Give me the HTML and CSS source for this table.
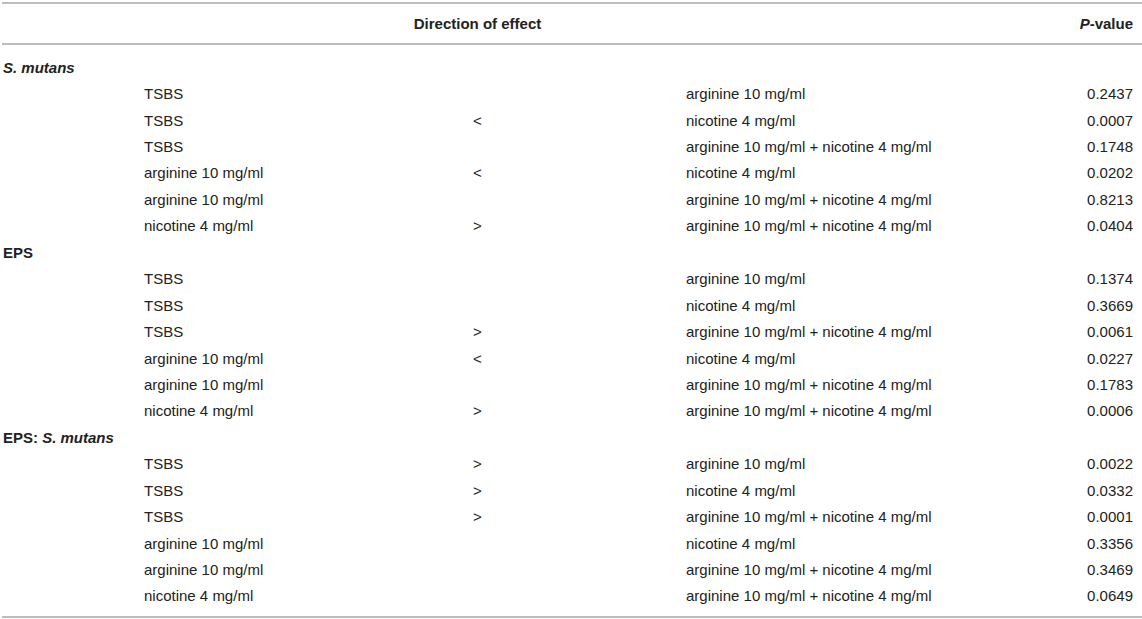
FILE: index.html
```html
<!DOCTYPE html>
<html lang="en">
<head>
  <meta charset="UTF-8">
  <title>Direction of effect</title>
  <link rel="stylesheet" href="styles.css">
</head>
<body>
  <table class="results">
    <colgroup>
      <col class="c-indent">
      <col class="c-label">
      <col class="c-dir">
      <col class="c-other">
      <col class="c-p">
    </colgroup>
    <thead>
      <tr>
        <th></th>
        <th></th>
        <th class="dir">Direction of effect</th>
        <th></th>
        <th class="pval"><i>P</i>-value</th>
      </tr>
    </thead>
    <tbody>
      <tr class="spacer"><td colspan="5"></td></tr>
      <tr class="section"><td colspan="5"><i>S. mutans</i></td></tr>
      <tr><td></td><td>TSBS</td><td class="dir"></td><td class="other">arginine 10 mg/ml</td><td class="pval">0.2437</td></tr>
      <tr><td></td><td>TSBS</td><td class="dir">&lt;</td><td class="other">nicotine 4 mg/ml</td><td class="pval">0.0007</td></tr>
      <tr><td></td><td>TSBS</td><td class="dir"></td><td class="other">arginine 10 mg/ml + nicotine 4 mg/ml</td><td class="pval">0.1748</td></tr>
      <tr><td></td><td>arginine 10 mg/ml</td><td class="dir">&lt;</td><td class="other">nicotine 4 mg/ml</td><td class="pval">0.0202</td></tr>
      <tr><td></td><td>arginine 10 mg/ml</td><td class="dir"></td><td class="other">arginine 10 mg/ml + nicotine 4 mg/ml</td><td class="pval">0.8213</td></tr>
      <tr><td></td><td>nicotine 4 mg/ml</td><td class="dir">&gt;</td><td class="other">arginine 10 mg/ml + nicotine 4 mg/ml</td><td class="pval">0.0404</td></tr>

      <tr class="section"><td colspan="5">EPS</td></tr>
      <tr><td></td><td>TSBS</td><td class="dir"></td><td class="other">arginine 10 mg/ml</td><td class="pval">0.1374</td></tr>
      <tr><td></td><td>TSBS</td><td class="dir"></td><td class="other">nicotine 4 mg/ml</td><td class="pval">0.3669</td></tr>
      <tr><td></td><td>TSBS</td><td class="dir">&gt;</td><td class="other">arginine 10 mg/ml + nicotine 4 mg/ml</td><td class="pval">0.0061</td></tr>
      <tr><td></td><td>arginine 10 mg/ml</td><td class="dir">&lt;</td><td class="other">nicotine 4 mg/ml</td><td class="pval">0.0227</td></tr>
      <tr><td></td><td>arginine 10 mg/ml</td><td class="dir"></td><td class="other">arginine 10 mg/ml + nicotine 4 mg/ml</td><td class="pval">0.1783</td></tr>
      <tr><td></td><td>nicotine 4 mg/ml</td><td class="dir">&gt;</td><td class="other">arginine 10 mg/ml + nicotine 4 mg/ml</td><td class="pval">0.0006</td></tr>

      <tr class="section"><td colspan="5">EPS: <i>S. mutans</i></td></tr>
      <tr><td></td><td>TSBS</td><td class="dir">&gt;</td><td class="other">arginine 10 mg/ml</td><td class="pval">0.0022</td></tr>
      <tr><td></td><td>TSBS</td><td class="dir">&gt;</td><td class="other">nicotine 4 mg/ml</td><td class="pval">0.0332</td></tr>
      <tr><td></td><td>TSBS</td><td class="dir">&gt;</td><td class="other">arginine 10 mg/ml + nicotine 4 mg/ml</td><td class="pval">0.0001</td></tr>
      <tr><td></td><td>arginine 10 mg/ml</td><td class="dir"></td><td class="other">nicotine 4 mg/ml</td><td class="pval">0.3356</td></tr>
      <tr><td></td><td>arginine 10 mg/ml</td><td class="dir"></td><td class="other">arginine 10 mg/ml + nicotine 4 mg/ml</td><td class="pval">0.3469</td></tr>
      <tr><td></td><td>nicotine 4 mg/ml</td><td class="dir"></td><td class="other">arginine 10 mg/ml + nicotine 4 mg/ml</td><td class="pval">0.0649</td></tr>
      <tr class="spacer end"><td colspan="5"></td></tr>
    </tbody>
  </table>
</body>
</html>
```

FILE: styles.css
```css
/* Results table */
body {
  margin: 0;
  padding: 2px 0 0 2px;
  background: #fff;
  font-family: "Liberation Sans", Arial, sans-serif;
  font-size: 15px;
  color: #222;
}
.results {
  width: 1140px;
  border-collapse: collapse;
  table-layout: fixed;
}
.c-indent { width: 142px; }
.c-label { width: 266px; }
.c-dir { width: 135px; }
.c-other { width: 490px; }
.c-p { width: 107px; }

.results thead tr {
  border-top: 2px solid #bdbdbd;
  border-bottom: 2px solid #bdbdbd;
}
.results th {
  height: 39px;
  padding: 0;
  font-weight: bold;
  text-align: left;
}
.results td {
  height: 26.45px;
  padding: 0;
  white-space: nowrap;
}
.results th.dir,
.results td.dir {
  text-align: center;
}
.results td.other {
  padding-left: 141px;
}
.results th.pval,
.results td.pval {
  text-align: right;
  padding-right: 9px;
}
.section td {
  padding-left: 1px;
  font-weight: bold;
}
.results .spacer td {
  height: 9px;
}
.results .spacer.end td {
  height: 7px;
}
.spacer.end {
  border-bottom: 2px solid #bdbdbd;
}
```
